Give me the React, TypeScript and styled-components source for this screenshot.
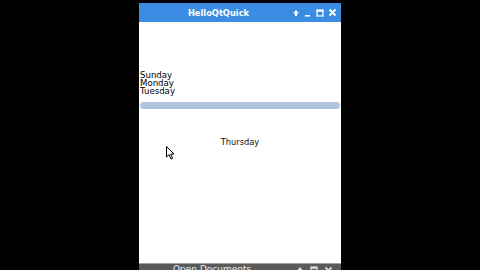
import React from 'react'
import styled, { createGlobalStyle } from 'styled-components'

const Global = createGlobalStyle`
  html, body { margin: 0; padding: 0; background: #000; }
  body { width: 480px; height: 270px; overflow: hidden; font-family: "DejaVu Sans", sans-serif; }
`

const Screen = styled.div`
  position: relative;
  width: 480px;
  height: 270px;
  display: flex;
  flex-direction: column;
  padding-top: 3px;
  box-sizing: border-box;
`

const Window = styled.div`
  margin-left: 139px;
  width: 202px;
  height: 261px;
  display: flex;
  flex-direction: column;
  background: #fff;
`

const TitleBar = styled.div`
  height: 19px;
  background: #3b8ce3;
  display: flex;
  align-items: center;
  position: relative;
  color: #fff;
`

const Title = styled.div`
  flex: 1;
  text-align: center;
  font-weight: bold;
  font-size: 8.3px;
  padding-left: 6px;
`

const Buttons = styled.div`
  display: flex;
  align-items: center;
  gap: 4px;
  padding-right: 4px;
`

const Content = styled.div`
  flex: 1;
  display: flex;
  flex-direction: column;
  padding-top: 49px;
`

const Day = styled.div`
  font-size: 8.6px;
  line-height: 8px;
  height: 8px;
  color: #000;
  padding-left: 1px;
`

const Bar = styled.div`
  margin: 7px 1px 0 1px;
  height: 7px;
  border-radius: 4px;
  background: #afc4de;
`

const Center = styled.div`
  margin-top: 28px;
  text-align: center;
  font-size: 8.3px;
  color: #111;
`

const Dock = styled.div`
  margin-left: 139px;
  width: 202px;
  height: 6px;
  background: #5a5a5a;
  border-top: 1px solid #9aa3ad;
  display: flex;
  align-items: flex-start;
  overflow: hidden;
  color: #eee;
  font-size: 9px;
  line-height: 10px;
`

const DockLabel = styled.div`
  margin-left: 34px;
  flex: 1;
`

const DockButtons = styled.div`
  display: flex;
  gap: 6px;
  padding: 2px 8px 0 0;
`

const Cursor = styled.svg`
  position: absolute;
  left: 166px;
  top: 146px;
`

const Icon = ({ kind, color = '#fff' }: { kind: string; color?: string }) => {
  if (kind === 'up')
    return (
      <svg width="8" height="8" viewBox="0 0 8 8">
        <path d="M4 1 L1 4.5 H3 V7 H5 V4.5 H7 Z" fill={color} />
      </svg>
    )
  if (kind === 'min')
    return (
      <svg width="8" height="8" viewBox="0 0 8 8">
        <rect x="1" y="6" width="5" height="1.6" fill={color} />
      </svg>
    )
  if (kind === 'max')
    return (
      <svg width="8" height="8" viewBox="0 0 8 8">
        <rect x="1" y="1" width="6" height="6" fill="none" stroke={color} strokeWidth="1.3" />
        <rect x="1" y="1" width="6" height="1.8" fill={color} />
      </svg>
    )
  return (
    <svg width="9" height="9" viewBox="0 0 9 9">
      <path d="M1.5 1.5 L7.5 7.5 M7.5 1.5 L1.5 7.5" stroke={color} strokeWidth="1.8" />
    </svg>
  )
}

export default function App() {
  return (
    <>
      <Global />
      <Screen>
        <Window>
          <TitleBar>
            <Title>HelloQtQuick</Title>
            <Buttons>
              <Icon kind="up" />
              <Icon kind="min" />
              <Icon kind="max" />
              <Icon kind="close" />
            </Buttons>
          </TitleBar>
          <Content>
            <Day>Sunday</Day>
            <Day>Monday</Day>
            <Day>Tuesday</Day>
            <Bar />
            <Center>Thursday</Center>
          </Content>
        </Window>
        <Dock>
          <DockLabel>Open Documents</DockLabel>
          <DockButtons>
            <Icon kind="up" color="#ddd" />
            <Icon kind="max" color="#ddd" />
            <Icon kind="close" color="#ddd" />
          </DockButtons>
        </Dock>
        <Cursor width="10" height="14" viewBox="0 0 10 14">
          <path d="M0.5 0.5 L0.5 11 L3 8.6 L5 13 L6.6 12.3 L4.7 8 L8 8 Z" fill="#fff" stroke="#000" strokeWidth="1" />
        </Cursor>
      </Screen>
    </>
  )
}
